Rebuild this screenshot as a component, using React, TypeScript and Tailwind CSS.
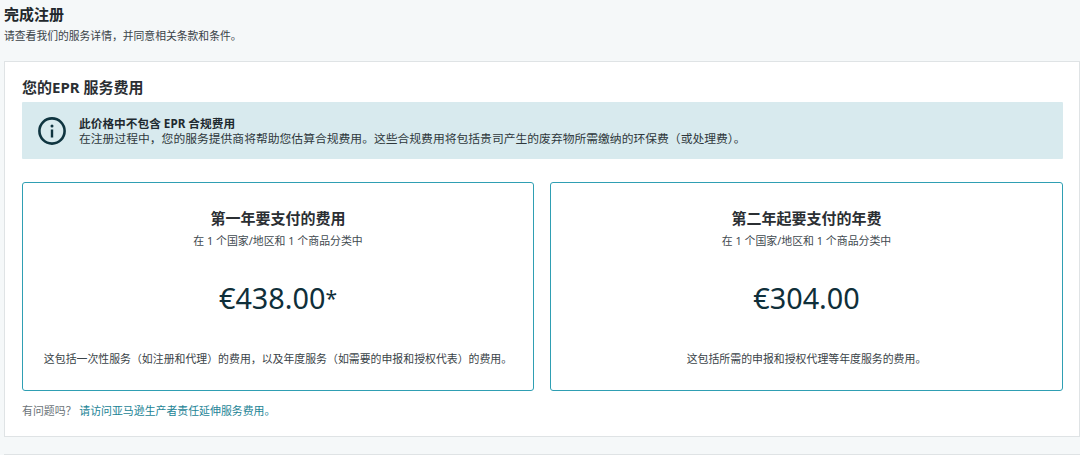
const font = { fontFamily: '"Noto Sans", "Noto Sans CJK SC", sans-serif' }

interface FeeCardProps {
  title: string
  price: string
  mark?: string
  note: string
}

function FeeCard({ title, price, mark, note }: FeeCardProps) {
  return (
    <div className="flex h-[209px] flex-col items-center rounded-[3px] border border-[#2f9fb3] bg-white text-center">
      <h3 className="mt-[24px] text-[15px] leading-[22px] font-bold text-[#2b2f33]">{title}</h3>
      <p className="mt-[4px] text-[10.9px] leading-[16px] text-[#3f4a50]">在 1 个国家/地区和 1 个商品分类中</p>
      <p className="mt-[30px] text-[28.8px] leading-[38px] text-[#0f2f3a]">
        {price}
        {mark && <span className="align-[3px] text-[21px]">{mark}</span>}
      </p>
      <p className="mt-[34px] text-[10.9px] leading-[16px] text-[#3a4348]">{note}</p>
    </div>
  )
}

export default function App() {
  return (
    <div className="h-[455px] overflow-hidden bg-[#f5f8f9]" style={font}>
      <header className="pt-[4px] pl-[4px]">
        <h1 className="text-[15px] leading-[20px] font-bold text-[#22282c]">完成注册</h1>
        <p className="mt-[4px] text-[10.8px] leading-[16px] text-[#3a4348]">请查看我们的服务详情，并同意相关条款和条件。</p>
      </header>

      <section className="mt-[17px] ml-[4px] h-[376px] border border-[#dfe3e5] bg-white pt-[14px] pr-[16px] pl-[17px]">
        <h2 className="text-[15px] leading-[22px] font-bold text-[#2b2f33]">您的EPR 服务费用</h2>

        <div className="mt-[4px] flex h-[57px] items-center rounded-[1px] bg-[#d8eaee] pl-[16px]">
          <svg width="28" height="28" viewBox="0 0 28 28" fill="none" className="shrink-0">
            <circle cx="14" cy="14" r="12.6" stroke="#0f3540" strokeWidth="2.6" />
            <circle cx="14" cy="9" r="1.5" fill="#0f3540" />
            <rect x="12.8" y="12.5" width="2.4" height="8" fill="#0f3540" />
          </svg>
          <div className="ml-[13px] text-[11.8px] leading-[15px] text-[#2f383c]">
            <p className="text-[11.7px] font-bold text-[#1f2a30]">此价格中不包含 EPR 合规费用</p>
            <p>在注册过程中，您的服务提供商将帮助您估算合规费用。这些合规费用将包括贵司产生的废弃物所需缴纳的环保费（或处理费）。</p>
          </div>
        </div>

        <div className="mt-[23px] grid grid-cols-[512px_1fr] gap-[16px]">
          <FeeCard
            title="第一年要支付的费用"
            price="€438.00"
            mark="*"
            note="这包括一次性服务（如注册和代理）的费用，以及年度服务（如需要的申报和授权代表）的费用。"
          />
          <FeeCard
            title="第二年起要支付的年费"
            price="€304.00"
            note="这包括所需的申报和授权代理等年度服务的费用。"
          />
        </div>

        <p className="mt-[12px] text-[10.9px] leading-[16px] text-[#6b7378]">
          有问题吗？ <a className="text-[#1c8496]">请访问亚马逊生产者责任延伸服务费用。</a>
        </p>
      </section>

      <div className="mt-[17px] ml-[4px] h-[10px] border-t border-[#dfe3e5] bg-white" />
    </div>
  )
}
